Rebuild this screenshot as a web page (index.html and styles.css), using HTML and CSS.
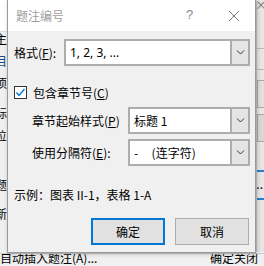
FILE: index.html
```html
<!DOCTYPE html>
<html lang="zh-CN">
<head>
  <meta charset="UTF-8">
  <title>题注编号</title>
  <link rel="stylesheet" href="styles.css">
</head>
<body>
  <!-- window behind the dialog -->
  <div class="backdrop">
    <div class="back-left">
      <div class="back-top"></div>
      <div class="back-item b1">主</div>
      <div class="back-item b2 blue">目录</div>
      <div class="back-item b3">项</div>
      <div class="back-item b4">标签</div>
      <div class="back-item b5">位置</div>
      <div class="back-item b6">题</div>
      <div class="back-item b7">新</div>
    </div>
    <div class="back-right">
      <div class="back-x">×</div>
      <div class="back-line l1"></div>
      <div class="back-line l2"></div>
      <div class="back-btn"></div>
      <div class="back-btn dim"></div>
      <div class="back-blue"></div>
      <div class="back-dots">...</div>
      <div class="back-blue"></div>
    </div>
    <div class="back-bottom">
      <span class="auto">自动插入题注(A)...</span>
      <span class="ok">确定</span>
      <span class="close">关闭</span>
    </div>
  </div>

  <!-- Caption numbering dialog -->
  <div class="dialog">
    <div class="titlebar">
      <span class="title">题注编号</span>
      <span class="help">?</span>
      <svg class="close-x" width="12" height="12" viewBox="0 0 12 12">
        <path d="M1 1L11 11M11 1L1 11" stroke="#777" stroke-width="1" fill="none"/>
      </svg>
    </div>

    <div class="body">
      <div class="row top-row">
        <label class="label-main">格式(<u>F</u>):</label>
        <div class="combo wide">
          <span class="value">1, 2, 3, ...</span>
          <span class="arrow"><svg width="9" height="5" viewBox="0 0 9 5"><path d="M1 0.5L4.5 4L8 0.5" stroke="#333" fill="none"/></svg></span>
        </div>
      </div>

      <div class="check-row">
        <span class="checkbox">
          <svg width="11" height="11" viewBox="0 0 11 11"><path d="M1.5 5.5L4 8.5L9.5 2" stroke="#0078d7" stroke-width="1.4" fill="none"/></svg>
        </span>
        <span>包含章节号(<u>C</u>)</span>
      </div>

      <div class="row sub-row first">
        <label class="label-sub">章节起始样式(<u>P</u>)</label>
        <div class="combo narrow">
          <span class="value">标题 1</span>
          <span class="arrow"><svg width="9" height="5" viewBox="0 0 9 5"><path d="M1 0.5L4.5 4L8 0.5" stroke="#333" fill="none"/></svg></span>
        </div>
      </div>

      <div class="row sub-row">
        <label class="label-sub">使用分隔符(<u>E</u>):</label>
        <div class="combo narrow">
          <span class="value">-&nbsp;&nbsp;&nbsp;&nbsp;&nbsp;(连字符)</span>
          <span class="arrow"><svg width="9" height="5" viewBox="0 0 9 5"><path d="M1 0.5L4.5 4L8 0.5" stroke="#333" fill="none"/></svg></span>
        </div>
      </div>

      <div class="example">示例：图表 II-1，表格 1-A</div>

      <div class="buttons">
        <button class="btn primary">确定</button>
        <button class="btn">取消</button>
      </div>
    </div>
  </div>
</body>
</html>
```

FILE: styles.css
```css
body {
  margin: 0;
  width: 264px;
  height: 266px;
  overflow: hidden;
  position: relative;
  font-family: "Noto Sans CJK SC", "Noto Sans", sans-serif;
  font-size: 12px;
  color: #000;
  background: #f0f0f0;
}

/* background window */
.backdrop {
  position: absolute;
  inset: 0;
}

.back-left {
  position: absolute;
  left: 0;
  top: 0;
  width: 8px;
  height: 252px;
  overflow: hidden;
  background: #f0f0f0;
}

.back-top {
  height: 31px;
  background: #fff;
  border-bottom: 1px solid #ddd;
}

.back-item {
  position: absolute;
  left: -5px;
  white-space: nowrap;
  font-size: 12px;
}

.back-item.blue { color: #1a4a8a; }
.b1 { top: 30px; }
.b2 { top: 52px; }
.b3 { top: 74px; }
.b4 { top: 104px; }
.b5 { top: 127px; }
.b6 { top: 176px; }
.b7 { top: 205px; }

.back-right {
  position: absolute;
  left: 256px;
  top: 0;
  width: 8px;
  height: 252px;
  overflow: hidden;
  background: #e6e6e6;
  border-left: 1px solid #ccc;
}

.back-x {
  color: #777;
  font-size: 12px;
  line-height: 10px;
  margin-left: -2px;
}

.back-line {
  height: 1px;
  background: #bbb;
  margin-top: 38px;
}

.back-line.l2 { margin-top: 20px; }

.back-btn {
  height: 26px;
  margin-top: 10px;
  background: #e0e0e0;
  border: 1px solid #aaa;
}

.back-btn.dim {
  margin-top: 6px;
  background: #d8d8d8;
}

.back-blue {
  height: 2px;
  background: #2b7bd0;
  margin-top: 28px;
}

.back-dots {
  margin-top: 6px;
  margin-left: -4px;
  line-height: 12px;
}

.back-blue + .back-dots + .back-blue { margin-top: 8px; }

.back-bottom {
  position: absolute;
  left: 0;
  top: 253px;
  width: 264px;
  height: 13px;
  background: #f0f0f0;
  border-top: 1px solid #ccc;
  font-size: 12px;
  line-height: 20px;
  overflow: hidden;
  white-space: nowrap;
}

.back-bottom .auto { position: absolute; left: 0; top: -6px; }
.back-bottom .ok { position: absolute; left: 210px; top: -6px; }
.back-bottom .close { position: absolute; left: 234px; top: -6px; }

/* dialog */
.dialog {
  position: absolute;
  left: 7px;
  top: 0;
  width: 247px;
  height: 252px;
  background: #f0f0f0;
  border: 1px solid #9a9a9a;
  border-top: none;
  box-shadow: 1px 1px 4px rgba(0, 0, 0, 0.25);
}

.titlebar {
  height: 31px;
  background: #fff;
  display: flex;
  align-items: center;
  position: relative;
}

.title {
  margin-left: 8px;
  color: #a0a0a0;
  font-size: 12px;
}

.help {
  position: absolute;
  left: 178px;
  top: 7px;
  color: #888;
  font-family: "Liberation Sans", sans-serif;
  font-size: 13px;
}

.close-x {
  position: absolute;
  left: 220px;
  top: 10px;
}

.body {
  padding: 8px 5px 0 6px;
}

.row {
  display: flex;
  align-items: center;
}

.label-main {
  width: 50px;
}

.label-sub {
  width: 96px;
}

.sub-row {
  padding-left: 18px;
  margin-top: 5px;
}

.sub-row.first {
  margin-top: 8px;
}

.combo {
  height: 23px;
  border: 2px solid #adadad;
  background: #fff;
  display: flex;
  align-items: center;
  justify-content: space-between;
}

.combo.wide { width: 182px; }
.combo.narrow { width: 118px; }

.value {
  padding-left: 4px;
  white-space: nowrap;
}

.combo.wide .value {
  font-family: "Noto Sans", sans-serif;
}

.arrow {
  width: 16px;
  height: 23px;
  background: #e5e5e5;
  border-left: 2px solid #adadad;
  display: flex;
  align-items: center;
  justify-content: center;
}

.check-row {
  display: flex;
  align-items: center;
  gap: 6px;
  margin-top: 20px;
  height: 13px;
}

.checkbox {
  width: 11px;
  height: 11px;
  border: 1px solid #333;
  background: #fff;
  display: flex;
}

.example {
  margin-top: 22px;
  height: 14px;
  line-height: 14px;
}

.buttons {
  display: flex;
  justify-content: flex-end;
  gap: 10px;
  margin-top: 16px;
  padding-right: 1px;
}

.btn {
  width: 74px;
  height: 27px;
  background: #e1e1e1;
  border: 1px solid #adadad;
  font-family: "Noto Sans CJK SC", sans-serif;
  font-size: 12px;
  padding: 0;
}

.btn.primary {
  border: 2px solid #0078d7;
}
```
